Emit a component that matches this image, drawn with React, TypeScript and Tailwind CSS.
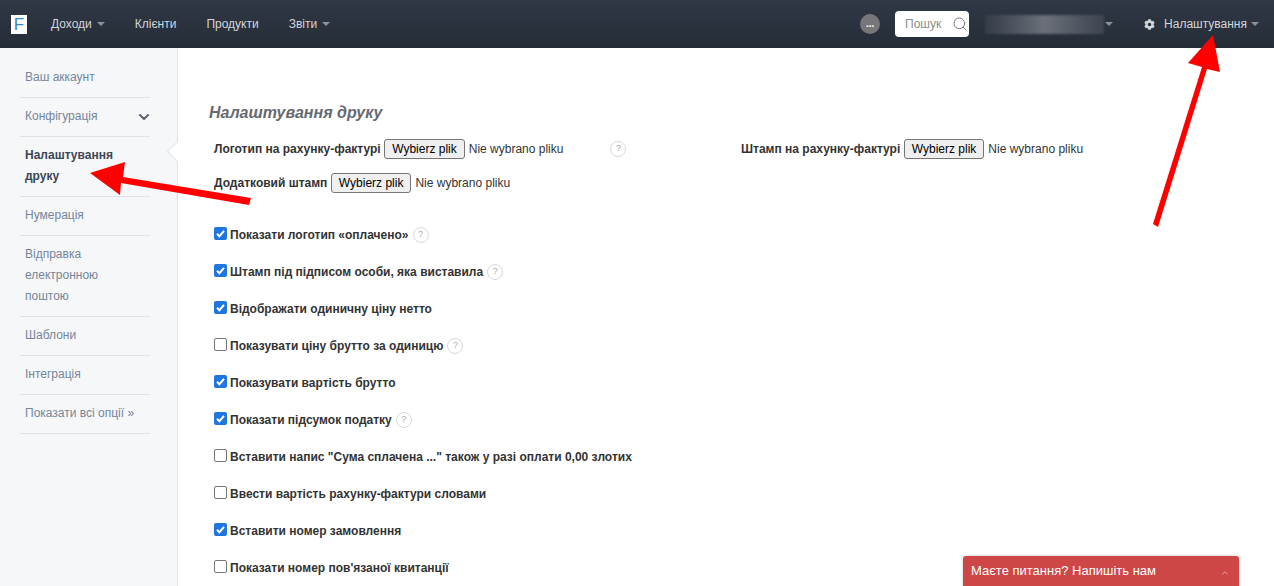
import { ChevronDown, ChevronUp, Search } from "lucide-react";
import { FaCog } from "react-icons/fa";

// Print settings page of the invoicing app, with the two red annotation arrows on top.

const font = "font-['Liberation_Sans',Arial,sans-serif]";

const menu = [
  { label: "Доходи", caret: true },
  { label: "Клієнти" },
  { label: "Продукти" },
  { label: "Звіти", caret: true },
];

const options = [
  { label: "Показати логотип «оплачено»", checked: true, help: true },
  { label: "Штамп під підписом особи, яка виставила", checked: true, help: true },
  { label: "Відображати одиничну ціну нетто", checked: true },
  { label: "Показувати ціну брутто за одиницю", checked: false, help: true },
  { label: "Показувати вартість брутто", checked: true },
  { label: "Показати підсумок податку", checked: true, help: true },
  { label: "Вставити напис \"Сума сплачена ...\" також у разі оплати 0,00 злотих", checked: false },
  { label: "Ввести вартість рахунку-фактури словами", checked: false },
  { label: "Вставити номер замовлення", checked: true },
  { label: "Показати номер пов'язаної квитанції", checked: false },
];

function Caret({ className = "ml-[5px]" }: { className?: string }) {
  return <span className={`${className} inline-block h-0 w-0 border-x-[4px] border-t-[4px] border-x-transparent border-t-[#8a929c]`} />;
}

function Help() {
  return (
    <span className="flex h-[16px] w-[16px] shrink-0 items-center justify-center rounded-full border border-[#d9d9d9] bg-white text-[9px] font-normal text-[#a8a8a8]">
      ?
    </span>
  );
}

function Checkbox({ checked }: { checked: boolean }) {
  if (!checked) {
    return <span className="block h-[13px] w-[13px] shrink-0 rounded-[2px] border border-[#767676] bg-white" />;
  }
  return (
    <span className="flex h-[13px] w-[13px] shrink-0 items-center justify-center rounded-[2px] bg-[#1f76e0]">
      <svg width="11" height="11" viewBox="0 0 11 11" fill="none" stroke="white" strokeWidth="2">
        <path d="M2 5.8 4.4 8.2 9 2.8" />
      </svg>
    </span>
  );
}

function FilePicker({ label }: { label: string }) {
  return (
    <div className="flex items-center">
      <span className="text-[12px] font-bold text-[#333]">{label}</span>
      <button className="ml-[3.5px] h-[20px] rounded-[3px] border border-[#767676] bg-[#efefef] px-[7px] text-[12px] leading-none text-black">
        Wybierz plik
      </button>
      <span className="ml-[4px] text-[12px] text-[#333]">Nie wybrano pliku</span>
    </div>
  );
}

function SideItem({ children, bold }: { children: React.ReactNode; bold?: boolean }) {
  return (
    <div className={`border-b border-[#dfe3e8] pb-[9px] pl-[5px] pr-[10px] pt-[8px] text-[12px] leading-[21px] ${bold ? "font-bold text-[#3c4654]" : "text-[#75869b]"}`}>
      {children}
    </div>
  );
}

export default function App() {
  return (
    <div className={`${font} relative h-[586px] w-[1274px] overflow-hidden bg-white`}>
      <header className="flex h-[48px] items-center bg-gradient-to-b from-[#2f3845] to-[#252d38] text-[12px] text-[#d3d6da]">
        <div className="ml-[11px] flex h-[19px] w-[16px] items-center justify-center bg-white text-[17px] leading-none text-[#3d87b8]">
          F
        </div>
        <nav className="ml-[24px] flex items-center gap-[30px]">
          {menu.map((m) => (
            <span key={m.label} className="flex items-center">
              {m.label}
              {m.caret && <Caret />}
            </span>
          ))}
        </nav>
        <span className="ml-auto flex h-[20px] w-[20px] items-center justify-center rounded-full bg-[#77777a] text-[10px] font-bold leading-none text-white">
          ...
        </span>
        <div className="ml-[15px] flex h-[26px] w-[74px] items-center justify-between rounded-[4px] bg-white pl-[10px] pr-[1px] text-[#8c8c8c]">
          Пошук
          <Search size={16} strokeWidth={1.5} className="text-[#777]" />
        </div>
        <div className="ml-[16px] flex w-[128px] items-center">
          <div className="h-[19px] w-[120px] bg-gradient-to-r from-[#343c48] via-[#6b7079] to-[#3d444f] blur-[1px]" />
          <Caret className="ml-[1px]" />
        </div>
        <span className="ml-[31px] flex items-center">
          <FaCog size={11} className="text-[#d3d6da]" />
          <span className="ml-[9px]">Налаштування</span>
          <Caret className="ml-[4px]" />
        </span>
        <span className="w-[15px]" />
      </header>

      <div className="flex">
        <aside className="relative h-[538px] w-[178px] shrink-0 border-r border-[#dfe3e8] bg-[#f6f7f8] pl-[20px] pr-[27px] pt-[11px]">
          <SideItem>Ваш аккаунт</SideItem>
          <SideItem>
            <span className="-mr-[12px] flex items-center justify-between">
              Конфігурація
              <ChevronDown size={16} strokeWidth={3} className="text-[#5a6470]" />
            </span>
          </SideItem>
          <SideItem bold>Налаштування друку</SideItem>
          <SideItem>Нумерація</SideItem>
          <SideItem>Відправка електронною поштою</SideItem>
          <SideItem>Шаблони</SideItem>
          <SideItem>Інтеграція</SideItem>
          <SideItem>Показати всі опції »</SideItem>
          {/* notch pointing at the active item */}
          <span className="absolute right-[-1px] top-[96px] h-[15px] w-[15px] translate-x-[7px] rotate-45 border-b border-l border-[#dfe3e8] bg-white" />
        </aside>

        <main className="flex-1 pl-[31px] pt-[55px]">
          <h2 className="text-[16px] font-bold italic leading-[20px] text-[#666a70]">
            Налаштування друку
          </h2>
          <div className="ml-[5px] mt-[16px] flex h-[20px] items-center">
            <div className="flex w-[527px] items-center">
              <FilePicker label="Логотип на рахунку-фактурі" />
              <span className="ml-[47px]">
                <Help />
              </span>
            </div>
            <FilePicker label="Штамп на рахунку-фактурі" />
          </div>
          <div className="ml-[5px] mt-[14px]">
            <FilePicker label="Додатковий штамп" />
          </div>
          <div className="ml-[5px] mt-[34px] flex flex-col gap-[21px]">
            {options.map((o) => (
              <label key={o.label} className="flex h-[16px] items-center">
                <span className="-translate-y-[2px]">
                  <Checkbox checked={o.checked} />
                </span>
                <span className="ml-[3px] text-[12px] font-bold text-[#333]">{o.label}</span>
                {o.help && (
                  <span className="ml-[4px]">
                    <Help />
                  </span>
                )}
              </label>
            ))}
          </div>
        </main>
      </div>

      {/* chat widget */}
      <div className="absolute left-[963px] top-[556px] flex h-[40px] w-[276px] justify-between rounded-t-[3px] bg-[#cf4646] pl-[8px] pr-[9px] pt-[7px] text-[13px] leading-[16px] text-white shadow-[0_0_3px_rgba(0,0,0,0.25)]">
        Маєте питання? Напишіть нам
        <ChevronUp size={10} strokeWidth={1.5} className="mt-[5px] text-[#f6d8d8]" />
      </div>

      {/* annotation arrows */}
      <svg className="pointer-events-none absolute left-0 top-0" width="1274" height="586" fill="#ff0000">
        <path d="M90 173 125 162 123 177 251 198 249 205 121 183 120 195Z" />
        <path d="M1213 35 1220 72 1207 69 1158 227 1153 224 1202 67 1188 63Z" />
      </svg>
    </div>
  );
}
